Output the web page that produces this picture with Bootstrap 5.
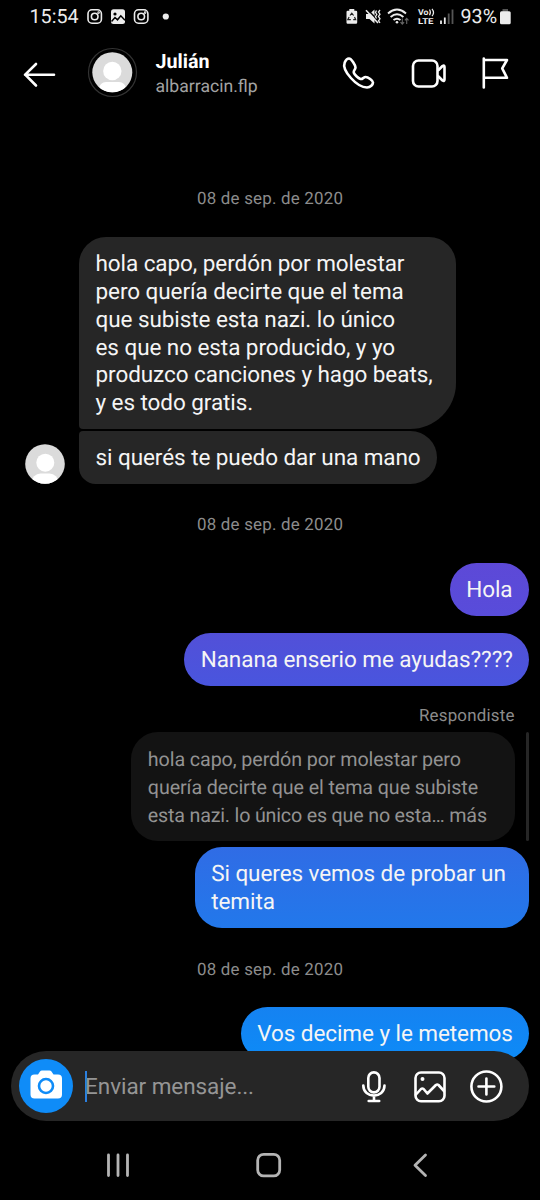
<!DOCTYPE html>
<html lang="es">
<head>
<meta charset="utf-8">
<meta name="viewport" content="width=device-width, initial-scale=1">
<title>Mensajes</title>
<link href="https://cdn.jsdelivr.net/npm/bootstrap@5.3.0/dist/css/bootstrap.min.css" rel="stylesheet">
<style>
body{background:#000;color:#f5f5f5;font-family:Roboto,"Noto Sans",sans-serif;height:1200px;overflow:hidden;text-rendering:geometricPrecision}
svg{display:block;flex:none;overflow:visible}
.ln{fill:none;stroke:#fff;stroke-width:2.6;stroke-linecap:round;stroke-linejoin:round}
.statusbar{height:34px;padding-left:29.5px;font-size:19.7px;line-height:34px;color:#ececec}
.topbar{height:78px;padding-left:22px}
.who{margin-left:17.5px;width:185px}
.who-name{font-size:19.7px;line-height:24px;padding-top:3px;font-weight:700;color:#fff}
.who-user{font-size:17.6px;line-height:26px;color:#a3a3a3}
.chat{height:974px;padding:76px 11.3px 0 0;overflow:hidden}
.stamp{font-size:16.9px;line-height:20px;color:#8c8c8c;letter-spacing:.22px;text-align:center;position:relative;top:1px}
.day{padding-left:11.5px}
.bubble{font-size:22.5px;letter-spacing:-.07px;line-height:27.8px;padding:14.3px 16.5px 11.2px;border-radius:27px;white-space:nowrap}
.in{background:#262626}
.in-first{width:377px;border-radius:27px 27px 46px 4px;margin-top:29px}
.in-last{width:358px;border-radius:4px 27px 27px 17px;margin-left:14px}
.out1{background:linear-gradient(#5d49d7,#584cda);width:79px}
.out2{background:linear-gradient(#5250d8,#4955de);width:344.5px}
.out3{background:linear-gradient(#306ce5,#2278eb);width:334px}
.out4{background:linear-gradient(#1582f1,#0d8bf7);width:288px}
.quote{background:#131313;color:#929292;font-size:19.7px;letter-spacing:-.09px;line-height:27.8px;width:383.5px;height:109px;padding:14.8px 16.5px;border-radius:27px;white-space:nowrap}
.quote-end{letter-spacing:-.19px}
.rule{width:2.6px;background:#262626;border-radius:2px;margin-left:11.3px}
.composer{height:70px;margin:-35px 11px 0 11px;background:#262626;border-radius:35px;position:relative;padding:0 24px 0 8px}
.cam{width:54px;height:54px;background:#0f8cf8}
.caret{width:2.6px;height:31px;background:#2b80e0;margin-left:11.5px}
.ph{font-size:22.5px;letter-spacing:-.07px;line-height:28px;color:#959595;margin-left:-2px;padding-top:2.5px}
.navkeys{height:79px;padding-top:8px}
</style>
</head>
<body>
<div class="statusbar d-flex">
  <span style="width:56.500px">15:54</span>
  <svg width="90" height="34" viewBox="86 0 90 34" fill="none" stroke="#ececec" stroke-width="1.6">
    <rect x="88" y="9.8" width="13.4" height="13.4" rx="4"/><circle cx="94.7" cy="16.5" r="3.3"/><circle cx="98.6" cy="12.6" r=".5"/>
    <rect x="111" y="9.3" width="14" height="14.6" rx="2.5" fill="#ececec" stroke="none"/>
    <circle cx="115" cy="14" r="1.6" fill="#000" stroke="none"/><path d="M111.5 21.5l3.5-4 2.5 2.3 3.3-4 4.2 4.5" stroke="#000" stroke-width="1.5"/>
    <rect x="134.5" y="9.8" width="13.4" height="13.4" rx="4"/><circle cx="141.2" cy="16.5" r="3.3"/><circle cx="145.1" cy="12.6" r=".5"/>
    <circle cx="165.8" cy="16.5" r="3.1" fill="#ececec" stroke="none"/>
  </svg>
  <svg class="ms-auto" width="116" height="34" viewBox="344 0 116 34" fill="none" stroke="#ececec" stroke-width="1.7">
    <path d="M349.3 9h5v1.7h1.7q1.2 0 1.2 1.2v10.6q0 1.2-1.2 1.2h-8.3q-1.2 0-1.2-1.2V11.9q0-1.2 1.2-1.2h1.6z" fill="#ececec" stroke="none"/>
    <path d="M350 15.5l1.8-2.3 1.8 2.3M354.5 17l1.2 2.7h-2.5M350.8 19.7h-3l1.3-2.7" stroke="#222" stroke-width="1.2"/>
    <path d="M366 14h3.500l5-4.500v14l-5-4.500H366z" fill="#ececec" stroke="none"/><path d="M367.500 9.500l12 12.500" stroke="#000" stroke-width="1.500"/><path d="M366 10.300l12 12.700" stroke-width="1.600"/>
    <path d="M376.500 10.500l-1 2 1.300 2-1.300 2 1 2M380 10l-1.500 2 1.500 2.200-1.500 2.300 1.500 2.300-1.500 2 1.500 2" stroke-width="1.300"/>
    <path d="M388 13.500q9-7.800 18 0M390.600 17q6.400-5.500 12.800 0M393.500 20q3.500-2.700 7 0" stroke-width="1.900"/><circle cx="397" cy="22.200" r="1.300" fill="#ececec" stroke="none"/>
    <path d="M402.300 18.500v5.500m-1.800-1.800l1.800 2 1.800-2M406.700 24v-5.500m-1.800 1.800l1.800-2 1.800 2" stroke="#666" stroke-width="1.100"/>
    <g fill="#ececec" stroke="none" font-family="Roboto,sans-serif" font-size="8.200" font-weight="700"><text x="418" y="15.200" textLength="10.500" lengthAdjust="spacingAndGlyphs">Vo</text><text x="418" y="24.200" textLength="15.500" lengthAdjust="spacingAndGlyphs">LTE</text></g>
    <path d="M429.500 9.500q1.800 2.800 0 5.700M432 8.800q3 3.800 0 7.300" stroke-width="1.200"/>
    <path d="M441 20.500V24M444.800 17.500V24" stroke-width="1.800"/><path d="M448.700 13.500V24M452.500 9.500V24" stroke="#555" stroke-width="1.800"/>
  </svg>
  <span style="width:39px;padding-left:.500px">93%</span>
  <svg width="41" height="34" viewBox="499 0 41 34"><path d="M502.500 9h5.500v3h-5.500z" fill="#555"/><rect x="500" y="11.200" width="10.700" height="13" rx="1.500" fill="#ececec"/></svg>
</div>
<header class="topbar d-flex align-items-center">
  <svg class="ln" width="66" height="78" viewBox="22 34 66 78"><path d="M54 74.700H25M36 64L25.200 74.700 36 85.500"/></svg>
  <svg width="50" height="78" viewBox="88 34 50 78">
    <defs><clipPath id="c1"><circle cx="112.300" cy="72.300" r="20"/></clipPath></defs>
    <circle cx="112.500" cy="72.500" r="24" fill="none" stroke="#333" stroke-width="1.200"/>
    <g clip-path="url(#c1)"><path d="M92 52h41v41H92z" fill="#dbdbdb"/><circle cx="112.300" cy="71" r="9.200" fill="#fff"/><rect x="99" y="82" width="27" height="20" rx="7" fill="#fff"/></g>
  </svg>
  <div class="who"><div class="who-name">Julián</div><div class="who-user">albarracin.flp</div></div>
  <svg class="ln" width="180" height="78" viewBox="341 34 180 78">
    <path d="M344.700 62.500C345.700 60 347 58.500 349 58.500C351.500 58.500 355.500 65.500 355.500 67.500C355.500 69.500 353 70.700 353.700 72.500C354.500 74.700 358 78.200 360.500 79C362.500 79.600 363.500 77 365.700 77C368 77 373 80.700 373 82.500C373 84.500 370.500 87.500 367 87.500C357 87.500 341.500 70.500 344.700 62.500Z"/>
    <rect x="413" y="60.500" width="24.500" height="26" rx="5.500"/><path d="M438.500 70l4-4q2-1.300 2 1v12.500q0 2.300-2 1l-4-4"/>
    <path d="M483.800 58.500v29M483.800 60H507l-4.800 8.300 4.800 9.500h-23.200"/>
  </svg>
</header>
<main class="chat d-flex flex-column">
  <div class="stamp day">08 de sep. de 2020</div>
  <div class="bubble in in-first" style="margin-left:79px">hola capo, perdón por molestar<br>pero quería decirte que el tema<br>que subiste esta nazi. lo único<br>es que no esta producido, y yo<br>produzco canciones y hago beats,<br>y es todo gratis.</div>
  <div class="d-flex align-items-end" style="margin-top:1.600px;margin-left:25px">
    <svg width="40" height="40" viewBox="0 0 40 40"><defs><clipPath id="c2"><circle cx="20" cy="20" r="19.800"/></clipPath></defs><g clip-path="url(#c2)"><path d="M0 0h40v40H0z" fill="#dbdbdb"/><circle cx="20.300" cy="18.700" r="9" fill="#fff"/><rect x="6.500" y="29.500" width="27" height="20" rx="9" fill="#fff"/></g></svg>
    <div class="bubble in in-last">si querés te puedo dar una mano</div>
  </div>
  <div class="stamp day" style="margin-top:30.200px">08 de sep. de 2020</div>
  <div class="bubble out1 align-self-end" style="margin-top:28.700px">Hola</div>
  <div class="bubble out2 align-self-end" style="margin-top:16.600px">Nanana enserio me ayudas????</div>
  <div class="stamp text-end" style="margin-top:19px;padding-right:14px">Respondiste</div>
  <div class="d-flex justify-content-end" style="margin-top:6.500px">
    <div class="quote">hola capo, perdón por molestar pero<br>quería decirte que el tema que subiste<br><span class="quote-end">esta nazi. lo único es que no esta… más</span></div>
    <div class="rule"></div>
  </div>
  <div class="bubble out3 align-self-end" style="margin-top:6px">Si queres vemos de probar un<br>temita</div>
  <div class="stamp day" style="margin-top:30.900px">08 de sep. de 2020</div>
  <div class="bubble out4 align-self-end" style="margin-top:28.500px">Vos decime y le metemos</div>
</main>
<div class="composer d-flex align-items-center">
  <div class="cam rounded-circle"><svg width="54" height="54" viewBox="19 1058.500 54 54"><path d="M34.500 1074h3.500l2-3q.7-1 2-1h7.500q1.300 0 2 1l2 3h4.500q4 0 4 4v16q0 4-4 4H34.500q-4 0-4-4v-16q0-4 4-4z" fill="#fff"/><circle cx="46" cy="1085.500" r="7" fill="#fff" stroke="#0f8cf8" stroke-width="2.600"/></svg></div>
  <div class="caret"></div><div class="ph">Enviar mensaje...</div>
  <svg class="ln ms-auto" width="146" height="70" viewBox="359 1051 146 70">
    <rect x="368.300" y="1072.400" width="11.200" height="20" rx="5.600"/><path d="M363.300 1085.500c0 13.500 21.200 13.500 21.200 0M374 1095.500v5M368.700 1101h10.500"/>
    <rect x="415.500" y="1072.500" width="29" height="28.800" rx="5.500"/><circle cx="422.500" cy="1079" r="1" stroke-width="2"/><path d="M416 1094.500l5-5.500q1.300-1 2.600 0l3.800 4.500 8.500-8.500q1.300-1 2.600 0l5.500 6"/>
    <circle cx="486.400" cy="1086.500" r="15"/><path d="M478.500 1086.500h15.800M486.400 1078.600v15.800"/>
  </svg>
</div>
<nav class="navkeys">
  <svg width="540" height="71" viewBox="0 1129 540 71" fill="none" stroke="#b4b4b4" stroke-width="2.800" stroke-linecap="round" stroke-linejoin="round">
    <path d="M108.500 1155v20.500M118 1155v20.500M127.500 1155v20.500"/><rect x="257.700" y="1154.300" width="22" height="21.600" rx="6"/><path d="M425.500 1155l-10.500 10.300 10.500 10.300"/>
  </svg>
</nav>
<script src="https://cdn.jsdelivr.net/npm/bootstrap@5.3.0/dist/js/bootstrap.bundle.min.js"></script>
</body>
</html>
